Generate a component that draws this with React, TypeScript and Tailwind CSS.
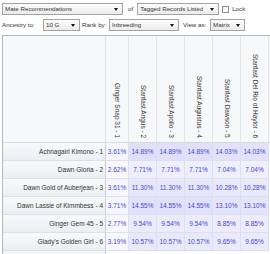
const sires = [
  'Ginger Snap 31 - 1',
  'Stanfast Angus - 2',
  'Stanfast Apollo - 3',
  'Stanfast Augustus - 4',
  'Stanfast Dawson - 5',
  'Stanfast Del Rio of Haylor - 6',
];

const rows = [
  { name: 'Achnagairl Kimono - 1', values: [3.61, 14.89, 14.89, 14.89, 14.03, 14.03] },
  { name: 'Dawn Gloria - 2', values: [2.62, 7.71, 7.71, 7.71, 7.04, 7.04] },
  { name: 'Dawn Gold of Auberjean - 3', values: [3.61, 11.3, 11.3, 11.3, 10.28, 10.28] },
  { name: 'Dawn Lassie of Kimmbess - 4', values: [3.71, 14.55, 14.55, 14.55, 13.1, 13.1] },
  { name: 'Ginger Gem 45 - 5', values: [2.77, 9.54, 9.54, 9.54, 8.85, 8.85] },
  { name: "Glady's Golden Girl - 6", values: [3.19, 10.57, 10.57, 10.57, 9.65, 9.65] },
];

const cols = 'grid grid-cols-[103px_23px_28px_28px_28px_28px_28px]';

// heat colour, white -> lavender as the value rises
const heat = (v: number) => {
  const t = Math.min(v / 15, 1);
  const mix = (a: number, b: number) => Math.round(a + (b - a) * t);
  return `rgb(${mix(253, 224)}, ${mix(253, 224)}, ${mix(255, 251)})`;
};

const Select = ({ label, width }: { label: string; width: string }) => (
  <div className={`${width} h-[12px] flex items-center justify-between border border-[#a3a3a3] bg-gradient-to-b from-[#fdfdfd] to-[#ebebeb] pl-[2px] pr-[4px]`}>
    <span className="truncate">{label}</span>
    <span className="w-0 h-0 border-l-[2.5px] border-r-[2.5px] border-t-[3px] border-l-transparent border-r-transparent border-t-[#111]" />
  </div>
);

export default function App() {
  return (
    <div className="w-[270px] h-[254px] overflow-hidden bg-white flex flex-col text-[#333] font-['Liberation_Sans',sans-serif]">
      <div className="flex items-center pl-[2px] mt-[3px] h-[12px] text-[6.2px]">
        <Select label="Mate Recommendations" width="w-[121px]" />
        <span className="ml-[5px]">of</span>
        <div className="ml-[4px]">
          <Select label="Tagged Records Listed" width="w-[82px]" />
        </div>
        <span className="ml-[3px] w-[7px] h-[7px] border border-[#8e8e8e] bg-gradient-to-b from-[#f2f2f2] to-white" />
        <span className="ml-[3px]">Lock</span>
      </div>

      <div className="flex items-center pl-[2px] mt-[4px] h-[12px] text-[6.2px]">
        <span className="w-[41px]">Ancestry to:</span>
        <Select label="10 G" width="w-[37px]" />
        <span className="ml-[2px] w-[27px]">Rank by:</span>
        <Select label="Inbreeding" width="w-[70px]" />
        <span className="ml-[4px] w-[27px]">View as:</span>
        <Select label="Matrix" width="w-[35px]" />
      </div>

      <div className="mt-[4px] ml-[2px] flex-1 flex flex-col border-l border-t border-[#b4b7bd] text-[6.5px]">
        <div className={`${cols} h-[107px] bg-[#f7f8fa] border-b border-[#d6d9de]`}>
          <div className="border-r border-[#dfe2e6]" />
          {sires.map(s => (
            <div key={s} className="border-r border-[#e3e5e9] flex items-end justify-center pb-[4px]">
              <span className="[writing-mode:vertical-rl] whitespace-nowrap leading-none">{s}</span>
            </div>
          ))}
        </div>

        {rows.map(r => (
          <div key={r.name} className={`${cols} h-[18px]`}>
            <div className="border-r border-b border-r-[#cdd0d6] border-b-[#dcdfe4] bg-gradient-to-b from-[#f8f9fb] to-[#eceef2] flex items-center justify-end pr-[2px] whitespace-nowrap">
              {r.name}
            </div>
            {r.values.map((v, i) => (
              <div
                key={i}
                className="border-r border-b border-[#dedfee] flex items-center justify-center text-[#4646dc] whitespace-nowrap"
                style={{ backgroundColor: heat(v) }}
              >
                {v.toFixed(2)}%
              </div>
            ))}
          </div>
        ))}

        <div className={`${cols} flex-1`}>
          <div className="bg-[#f3f4f6] border-r border-[#cdd0d6]" />
        </div>
      </div>
    </div>
  );
}
